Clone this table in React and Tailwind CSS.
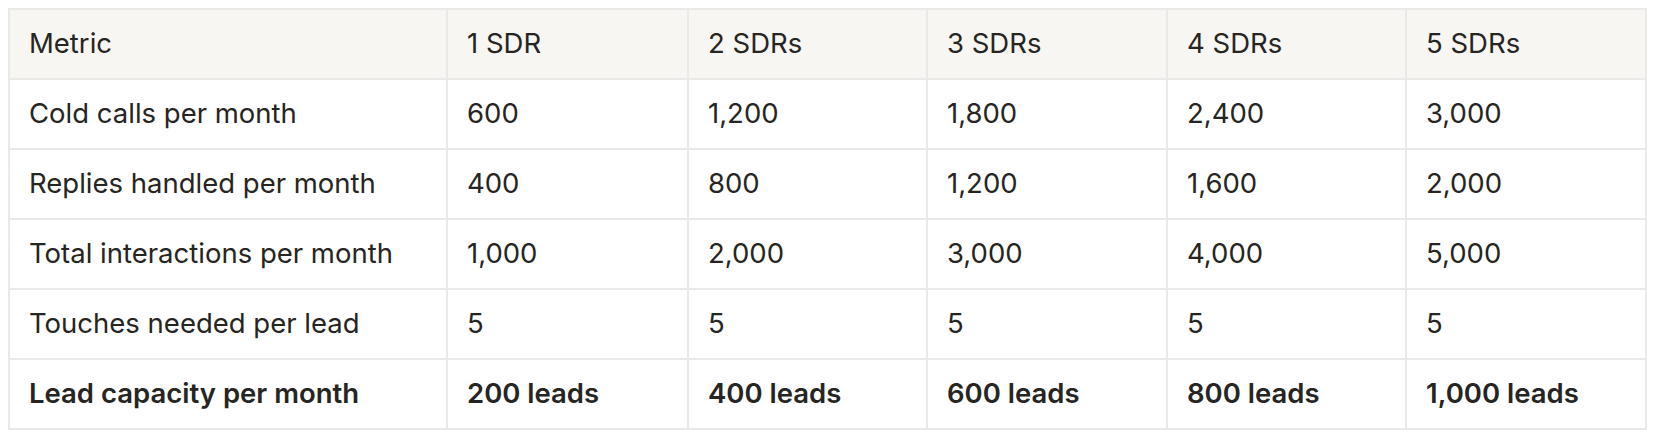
const HEAD = ['Metric', '1 SDR', '2 SDRs', '3 SDRs', '4 SDRs', '5 SDRs'];

const ROWS = [
  ['Cold calls per month', '600', '1,200', '1,800', '2,400', '3,000'],
  ['Replies handled per month', '400', '800', '1,200', '1,600', '2,000'],
  ['Total interactions per month', '1,000', '2,000', '3,000', '4,000', '5,000'],
  ['Touches needed per lead', '5', '5', '5', '5', '5'],
];

const TOTAL = ['Lead capacity per month', '200 leads', '400 leads', '600 leads', '800 leads', '1,000 leads'];

const WIDTHS = ['w-[438px]', 'w-[241px]', 'w-[239px]', 'w-[240px]', 'w-[239px]', 'w-[240px]'];

function Cell({ children, i, head, bold }) {
  return (
    <td
      className={`${WIDTHS[i]} h-[70px] border-2 border-[#e9e9e7] px-[19px] align-middle whitespace-nowrap ${
        head ? 'bg-[#f7f6f3]' : 'bg-white'
      } ${bold ? 'font-semibold' : 'font-normal'}`}
    >
      {children}
    </td>
  );
}

export default function App() {
  return (
    <div className="min-h-screen bg-white p-[8px] font-['Inter',sans-serif] text-[27.5px] text-[#262522]">
      <table className="table-fixed border-collapse w-[1637px]">
        <tbody>
          <tr>
            {HEAD.map((h, i) => (
              <Cell key={h} i={i} head>{h}</Cell>
            ))}
          </tr>
          {ROWS.map((r) => (
            <tr key={r[0]}>
              {r.map((v, i) => (
                <Cell key={i} i={i}>{v}</Cell>
              ))}
            </tr>
          ))}
          <tr>
            {TOTAL.map((v, i) => (
              <Cell key={i} i={i} bold>{v}</Cell>
            ))}
          </tr>
        </tbody>
      </table>
    </div>
  );
}
